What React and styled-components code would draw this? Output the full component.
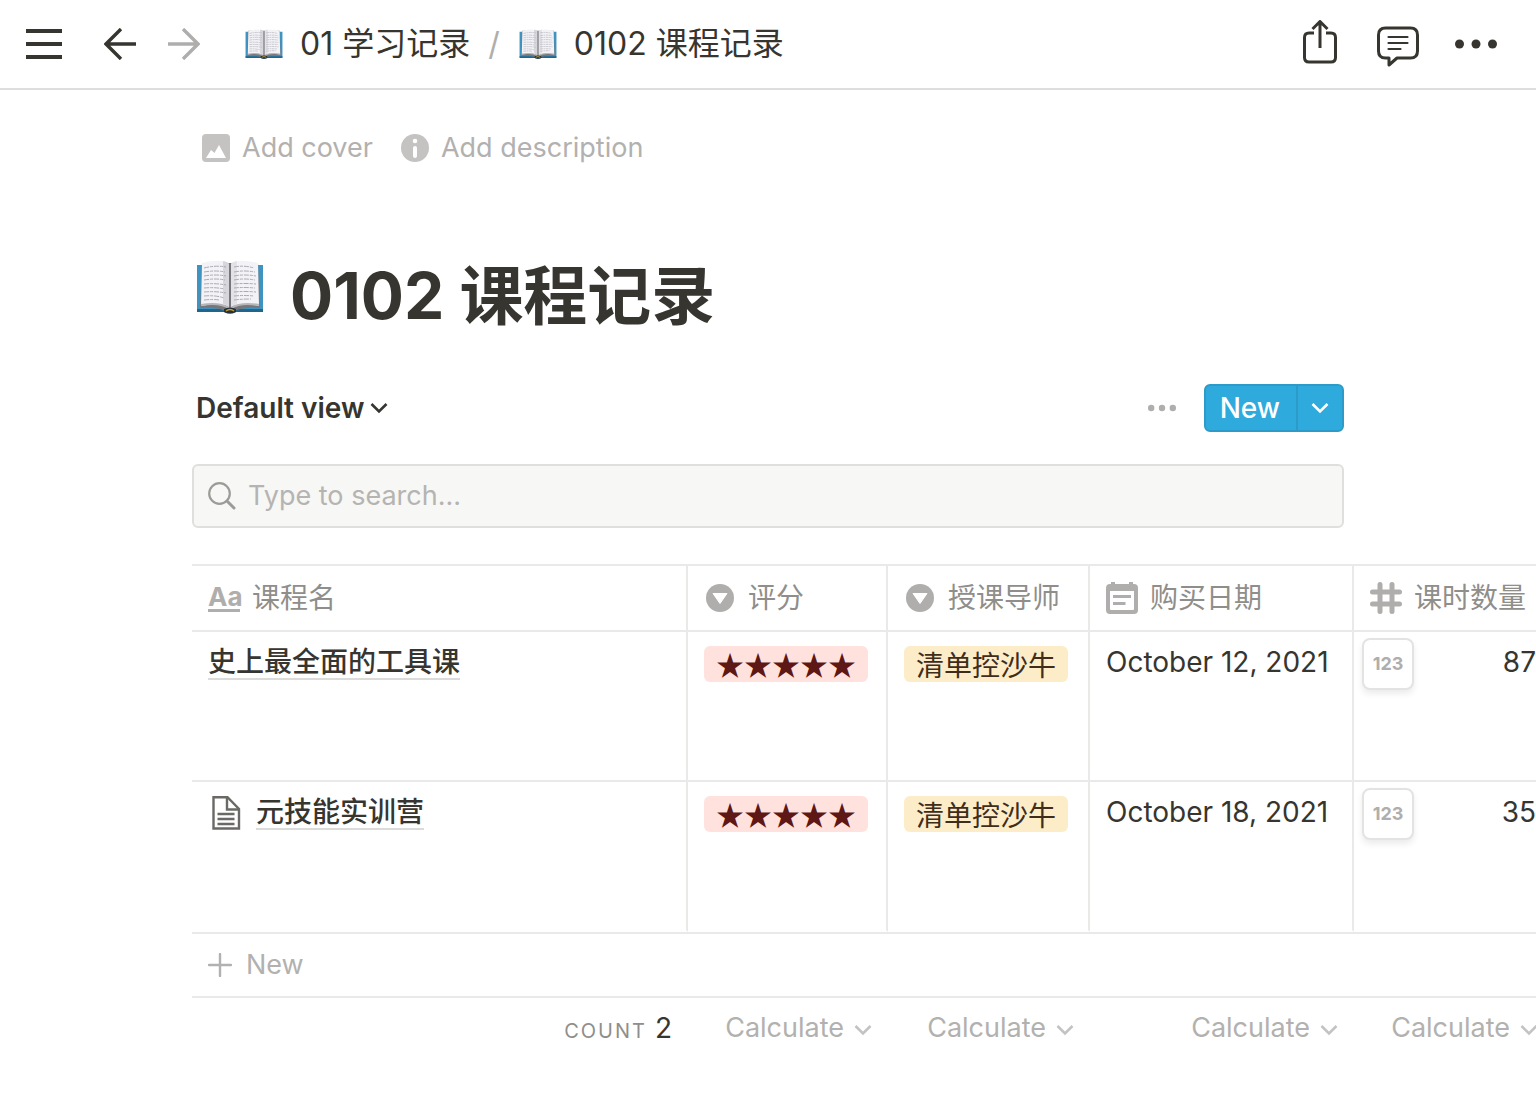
import React, { useState } from 'react'
import styled, { createGlobalStyle } from 'styled-components'

const GlobalStyle = createGlobalStyle`
  * {
    box-sizing: border-box;
  }

  body {
    margin: 0;
    background: #fff;
    color: #37352f;
    font-family: Inter, 'Noto Sans CJK SC', sans-serif;
    font-size: 28px;
    line-height: 32px;
    overflow-x: hidden;
  }

  button {
    display: flex;
    align-items: center;
    padding: 0;
    border: none;
    background: none;
    color: inherit;
    font: inherit;
    white-space: nowrap;
    cursor: pointer;
  }

  a {
    color: inherit;
    text-decoration: none;
  }

  svg {
    display: block;
    flex-shrink: 0;
  }
`

const Topbar = styled.header`
  display: flex;
  align-items: center;
  justify-content: space-between;
  height: 90px;
  padding: 0 39px 0 26px;
  border-bottom: 2px solid #dededd;
`

const TopbarLeft = styled.div`
  display: flex;
  align-items: center;
`

const NavButtons = styled.div`
  display: flex;
  align-items: center;
  gap: 32px;
  margin: 0 45px 0 42px;
`

const NavButton = styled.button`
  color: ${(p) => (p.$muted ? '#afaeac' : '#37352f')};
`

const TopbarActions = styled.div`
  display: flex;
  align-items: center;
  gap: 36px;
`

const Breadcrumb = styled.nav`
  display: flex;
  align-items: center;
  font-size: 32px;
  line-height: 40px;
  white-space: nowrap;
`

const Crumb = styled.a`
  display: flex;
  align-items: center;
  gap: 17px;
`

const Slash = styled.span`
  margin: 0 19px 0 18px;
  color: #afaeac;
`

const PageHead = styled.section`
  padding: 34px 192px 0;
`

const PageControls = styled.div`
  display: flex;
  align-items: center;
  gap: 28px;
  height: 48px;
  padding-left: 10px;
`

const PageControl = styled.button`
  gap: 12px;
  color: #b2b1af;
  font-size: 27px;
`

const TitleRow = styled.div`
  display: flex;
  align-items: flex-start;
  gap: 26px;
  margin-top: 86px;
  padding: 2px 4px 0;
`

const Title = styled.h1`
  margin: 0;
  font-size: 64px;
  font-weight: 700;
  line-height: 72px;
`

const ViewBar = styled.div`
  display: flex;
  align-items: center;
  justify-content: space-between;
  height: 48px;
  margin-top: 52px;
  padding-left: 4px;
`

const ViewButton = styled.button`
  gap: 6px;
  font-weight: 600;
`

const ViewActions = styled.div`
  display: flex;
  align-items: center;
  gap: 28px;
`

const MoreButton = styled.button`
  color: #afaeac;
`

const SplitButton = styled.div`
  display: flex;
  height: 48px;
  border: 2px solid #2d9bc9;
  border-radius: 6px;
  background: #2eaadc;
  color: #fff;
`

const NewButton = styled.button`
  padding: 0 16px 0 14px;
  font-weight: 500;
`

const NewMenuButton = styled.button`
  padding: 0 13px;
  border-left: 2px solid #2d9bc9;
`

const SearchBox = styled.label`
  display: flex;
  align-items: center;
  gap: 12px;
  height: 64px;
  margin-top: 32px;
  padding: 0 14px;
  border: 2px solid #dfdfde;
  border-radius: 6px;
  background: #f7f7f5;
  color: #9c9b98;
  font-size: 27px;
`

const SearchInput = styled.input`
  flex: 1;
  min-width: 0;
  padding: 0;
  border: none;
  outline: none;
  background: none;
  color: #37352f;
  font: inherit;

  &::placeholder {
    color: #b5b4b2;
    opacity: 1;
  }
`

const TableArea = styled.section`
  margin-top: 36px;
  padding-left: 192px;
  overflow: hidden;
`

const Table = styled.table`
  width: 1362px;
  table-layout: fixed;
  border-collapse: separate;
  border-spacing: 0;
  white-space: nowrap;
`

const Col = styled.col`
  width: ${(p) => p.$width}px;
`

const HeadCell = styled.th`
  height: 68px;
  padding: 0 16px;
  border: solid #e9e9e8;
  border-width: 2px 2px 2px 0;
  color: #8f8e8a;
  font-weight: 400;
  text-align: left;

  &:last-child {
    border-right: none;
  }
`

const HeadLabel = styled.div`
  display: flex;
  align-items: center;
  gap: 12px;

  svg {
    color: #afaeac;
  }
`

const TextType = styled.span`
  width: 32px;
  border-bottom: 3px solid #afaeac;
  color: #afaeac;
  font-size: 26px;
  font-weight: 700;
  line-height: 24px;
`

const Cell = styled.td`
  height: 150px;
  padding: 14px 16px;
  border: solid #e9e9e8;
  border-width: 0 2px 2px 0;
  vertical-align: top;

  &:last-child {
    border-right: none;
  }

  tr:last-child > & {
    border-bottom-color: transparent;
  }
`

const PageLink = styled.a`
  display: flex;
  align-items: center;
  gap: 12px;
  font-weight: 500;
`

const PageName = styled.span`
  border-bottom: 2px solid #dbdbda;
`

const Tag = styled.span`
  display: inline-block;
  height: 36px;
  padding: 0 12px;
  border-radius: 6px;
  background: ${(p) => (p.$color === 'red' ? '#ffe2dd' : '#fdecc8')};
  color: ${(p) => (p.$color === 'red' ? '#5d1715' : '#402c1b')};
  font-family: 'Noto Sans CJK SC', sans-serif;
  line-height: 36px;
  vertical-align: top;
`

const NumberCell = styled(Cell)`
  padding: 6px 18px 0 8px;
`

const NumberValue = styled.div`
  display: flex;
  justify-content: space-between;
  line-height: 48px;
`

const NumberChip = styled.button`
  justify-content: center;
  width: 52px;
  height: 52px;
  border: 2px solid #e3e3e2;
  border-radius: 8px;
  background: #fff;
  box-shadow: 0 4px 6px rgba(15, 15, 15, 0.08);
  color: #afaeac;
  font-size: 18px;
  font-weight: 700;
`

const AddCell = styled.td`
  padding: 0;
  border: solid #e9e9e8;
  border-width: 2px 0;
`

const AddButton = styled.button`
  gap: 14px;
  width: 100%;
  height: 62px;
  padding-left: 16px;
  color: #b2b1af;
  font-size: 27px;
`

const FootCell = styled.td`
  height: 60px;
  padding: 0 16px;
`

const FootValue = styled.div`
  display: flex;
  align-items: baseline;
  justify-content: flex-end;
  gap: 8px;
  padding-top: 2px;
`

const CountLabel = styled.span`
  color: #8f8e8a;
  font-size: 20px;
  letter-spacing: 2px;
`

const CalcButton = styled.button`
  gap: 10px;
  margin-left: auto;
  color: #b2b1af;
  font-size: 27px;

  svg {
    margin-top: 4px;
  }
`

const BookIcon = ({ width, height }) => (
  <svg width={width} height={height} viewBox='0 0 68 54' preserveAspectRatio='none'>
    <path d='M1 5h66v46H40q-6 4-12 0H1z' fill='#3f93c0' />
    <path d='M1 49h66v3H40q-6 3-12 0H1z' fill='#21658c' />
    <path d='M4 48 6 3h56l2 45q-17-1-25 3H29q-8-4-25-3z' fill='#77777a' />
    <path d='M6 3Q26-2 33 4v43Q24 42 5 46z' fill='#f3f3f7' />
    <path d='M62 3Q42-2 35 4v43q9-5 28-1z' fill='#f3f3f7' />
    <path d='M27 1q5 1 6 3v43q-2-2-6-3z' fill='#d6d6dc' />
    <path d='M41 1q-5 1-6 3v43q2-2 6-3z' fill='#e2e2e7' />
    <path d='M34 4v44' stroke='#77777b' strokeWidth='1.600' />
    <path d='M5 45q18-3 28 3M63 45q-18-3-28 3' fill='none' stroke='#b5b5ba' strokeWidth='2' />
    <path
      d='M8 8q12-3 22-1M8 12q12-2 21 0M8 16q12-2 22 0M8 20q12-2 21 0M8 24q12-1 22 1M8 28q12-1 20 1M8 32q12-1 22 1M8 36q12-1 20 2M8 40q10-1 15 0M38 7q10-2 20 1M38 12q10-2 21 0M38 16q10-2 22 0M38 20q10-2 21 0M38 24q10-1 22 0M38 28q10-1 21 0M38 32q10-1 22 0M38 36q10-1 20 0M38 40q8-1 17-1'
      fill='none'
      stroke='#a9a9b1'
      strokeWidth='1'
      strokeDasharray='5 1 3 1'
    />
    <path d='M28 49q6-3 12 0v3q-6 3-12 0z' fill='#25303a' />
    <path d='M30 51q4-3 8 0' fill='none' stroke='#c5a32c' strokeWidth='1.500' />
  </svg>
)

const MenuIcon = () => (
  <svg width='36' height='32' viewBox='0 0 36 32'>
    <path d='M0 3h36M0 16h36M0 29h36' stroke='currentColor' strokeWidth='4' />
  </svg>
)

const ArrowIcon = ({ right }) => (
  <svg width='32' height='32' viewBox='0 0 32 32' fill='none' stroke='currentColor' strokeWidth='3.400'>
    <path d={right ? 'M0 16h30M15 1l15 15-15 15' : 'M32 16H2M17 1 2 16l15 15'} />
  </svg>
)

const ShareIcon = () => (
  <svg width='40' height='48' viewBox='1 1 40 48' fill='none' stroke='currentColor' strokeWidth='3'>
    <path d='M14 14H9q-4.500 0-4.500 4.500v20q0 4.500 4.500 4.500h22q4.500 0 4.500-4.500v-20q0-4.500-4.500-4.500h-5' />
    <path d='M20 29V4M12.500 10 20 2.500 27.500 10' strokeLinejoin='round' />
  </svg>
)

const CommentIcon = () => (
  <svg width='42' height='46' viewBox='0 -4 42 46' fill='none' stroke='currentColor' strokeLinejoin='round'>
    <path
      d='M8.500 3h25q7 0 7 7v16q0 7-7 7H20l-8 7v-7H8.500q-7 0-7-7V10q0-7 7-7z'
      strokeWidth='3'
    />
    <path d='M11.500 12h19M11.500 18h19M11.500 24h12' strokeWidth='2.200' strokeLinecap='round' />
  </svg>
)

const DotsIcon = ({ width, r }) => (
  <svg width={width} height='12' viewBox={`0 0 ${width} 12`} fill='currentColor'>
    <circle cx={r} cy='6' r={r} />
    <circle cx={width / 2} cy='6' r={r} />
    <circle cx={width - r} cy='6' r={r} />
  </svg>
)

const ChevronIcon = ({ color = 'currentColor' }) => (
  <svg width='18' height='18' viewBox='0 0 18 18' fill='none' stroke={color} strokeWidth='2.600'>
    <path d='M1.500 5l7.500 7.500L16.500 5' />
  </svg>
)

const CoverIcon = () => (
  <svg width='28' height='28' viewBox='0 0 28 28'>
    <rect width='28' height='28' rx='4' fill='#c4c3c1' />
    <path d='M4 24l5-8 3.500 3L17 11l7 13z' fill='#fff' />
  </svg>
)

const InfoIcon = () => (
  <svg width='28' height='28' viewBox='0 0 28 28'>
    <circle cx='14' cy='14' r='14' fill='#c4c3c1' />
    <circle cx='14' cy='7' r='2.300' fill='#fff' />
    <rect x='12' y='12' width='4' height='12' rx='2' fill='#fff' />
  </svg>
)

const SearchIcon = () => (
  <svg width='28' height='28' viewBox='0 0 28 28' fill='none' stroke='currentColor' strokeLinecap='round'>
    <circle cx='11.500' cy='11.500' r='10.300' strokeWidth='2.200' />
    <path d='M19 19l7 7' strokeWidth='3' />
  </svg>
)

const SelectIcon = () => (
  <svg width='32' height='32' viewBox='0 0 32 32'>
    <circle cx='16' cy='16' r='14' fill='currentColor' />
    <path d='M9 11.500h14l-7 10z' fill='#fff' stroke='#fff' strokeLinejoin='round' />
  </svg>
)

const DateIcon = () => (
  <svg width='32' height='32' viewBox='0 0 32 32'>
    <path
      d='M5 0h4v2h14V0h4v2h1q4 0 4 4v22q0 4-4 4H4q-4 0-4-4V6q0-4 4-4h1zM4 9v18q0 1 1 1h22q1 0 1-1V9z'
      fill='currentColor'
      fillRule='evenodd'
    />
    <path d='M7 14.500h18M7 21.500h12.500' stroke='currentColor' strokeWidth='3' />
  </svg>
)

const HashIcon = () => (
  <svg width='32' height='32' viewBox='0 0 32 32'>
    <path
      d='M10 2.500v27M22 2.500v27M2.500 10h27M2.500 22h27'
      stroke='currentColor'
      strokeWidth='5'
      strokeLinecap='round'
    />
  </svg>
)

const PageIcon = () => (
  <svg width='36' height='34' viewBox='0 0 36 34' fill='none' stroke='#6a6965' strokeWidth='2.400'>
    <path d='M5.500 1.200h14L31 13v19.500H5.500z' />
    <path d='M19 1v12.500h12' />
    <path d='M9.500 18h17M9.500 23h17M9.500 28h17' />
  </svg>
)

const PlusIcon = () => (
  <svg width='24' height='24' viewBox='0 0 24 24'>
    <path d='M12 1v22M1 12h22' stroke='currentColor' strokeWidth='2.400' strokeLinecap='round' />
  </svg>
)

const columns = [
  { name: '课程名', width: 496, icon: <TextType>Aa</TextType> },
  { name: '评分', width: 200, icon: <SelectIcon /> },
  { name: '授课导师', width: 202, icon: <SelectIcon /> },
  { name: '购买日期', width: 264, icon: <DateIcon /> },
  { name: '课时数量', width: 200, icon: <HashIcon /> },
]

const courses = [
  { name: '史上最全面的工具课', rating: '★★★★★', mentor: '清单控沙牛', date: 'October 12, 2021', lessons: 87 },
  { name: '元技能实训营', hasPage: true, rating: '★★★★★', mentor: '清单控沙牛', date: 'October 18, 2021', lessons: 35 },
]

const App = () => {
  const [query, setQuery] = useState('')
  const rows = courses.filter((course) => course.name.includes(query))

  return (
    <>
      <GlobalStyle />
      <Topbar>
        <TopbarLeft>
          <NavButton aria-label='Open sidebar'>
            <MenuIcon />
          </NavButton>
          <NavButtons>
            <NavButton aria-label='Back'>
              <ArrowIcon />
            </NavButton>
            <NavButton $muted aria-label='Forward'>
              <ArrowIcon right />
            </NavButton>
          </NavButtons>
          <Breadcrumb>
            <Crumb href='#records'>
              <BookIcon width={38} height={30} />
              01 学习记录
            </Crumb>
            <Slash>/</Slash>
            <Crumb href='#courses'>
              <BookIcon width={38} height={30} />
              0102 课程记录
            </Crumb>
          </Breadcrumb>
        </TopbarLeft>
        <TopbarActions>
          <NavButton aria-label='Share'>
            <ShareIcon />
          </NavButton>
          <NavButton aria-label='Comments'>
            <CommentIcon />
          </NavButton>
          <NavButton aria-label='More'>
            <DotsIcon width={42} r={4.5} />
          </NavButton>
        </TopbarActions>
      </Topbar>

      <main>
        <PageHead>
          <PageControls>
            <PageControl>
              <CoverIcon />
              Add cover
            </PageControl>
            <PageControl>
              <InfoIcon />
              Add description
            </PageControl>
          </PageControls>
          <TitleRow>
            <BookIcon width={68} height={54} />
            <Title>0102 课程记录</Title>
          </TitleRow>
          <ViewBar>
            <ViewButton>
              Default view
              <ChevronIcon />
            </ViewButton>
            <ViewActions>
              <MoreButton aria-label='View options'>
                <DotsIcon width={28} r={3.2} />
              </MoreButton>
              <SplitButton>
                <NewButton>New</NewButton>
                <NewMenuButton aria-label='New from template'>
                  <ChevronIcon />
                </NewMenuButton>
              </SplitButton>
            </ViewActions>
          </ViewBar>
          <SearchBox>
            <SearchIcon />
            <SearchInput
              type='text'
              aria-label='Search'
              placeholder='Type to search...'
              value={query}
              onChange={(e) => setQuery(e.target.value)}
            />
          </SearchBox>
        </PageHead>

        <TableArea>
          <Table>
            <colgroup>
              {columns.map((column) => (
                <Col key={column.name} $width={column.width} />
              ))}
            </colgroup>
            <thead>
              <tr>
                {columns.map((column) => (
                  <HeadCell key={column.name} scope='col'>
                    <HeadLabel>
                      {column.icon}
                      {column.name}
                    </HeadLabel>
                  </HeadCell>
                ))}
              </tr>
            </thead>
            <tbody>
              {rows.map((course) => (
                <tr key={course.name}>
                  <Cell>
                    <PageLink href='#course'>
                      {course.hasPage && <PageIcon />}
                      <PageName>{course.name}</PageName>
                    </PageLink>
                  </Cell>
                  <Cell>
                    <Tag $color='red'>{course.rating}</Tag>
                  </Cell>
                  <Cell>
                    <Tag $color='yellow'>{course.mentor}</Tag>
                  </Cell>
                  <Cell>{course.date}</Cell>
                  <NumberCell>
                    <NumberValue>
                      <NumberChip>123</NumberChip>
                      {course.lessons}
                    </NumberValue>
                  </NumberCell>
                </tr>
              ))}
            </tbody>
            <tfoot>
              <tr>
                <AddCell colSpan={5}>
                  <AddButton>
                    <PlusIcon />
                    New
                  </AddButton>
                </AddCell>
              </tr>
              <tr>
                <FootCell>
                  <FootValue>
                    <CountLabel>COUNT</CountLabel>
                    {rows.length}
                  </FootValue>
                </FootCell>
                {columns.slice(1).map((column) => (
                  <FootCell key={column.name}>
                    <CalcButton>
                      Calculate
                      <ChevronIcon color='#c4c3c1' />
                    </CalcButton>
                  </FootCell>
                ))}
              </tr>
            </tfoot>
          </Table>
        </TableArea>
      </main>
    </>
  )
}

export default App
